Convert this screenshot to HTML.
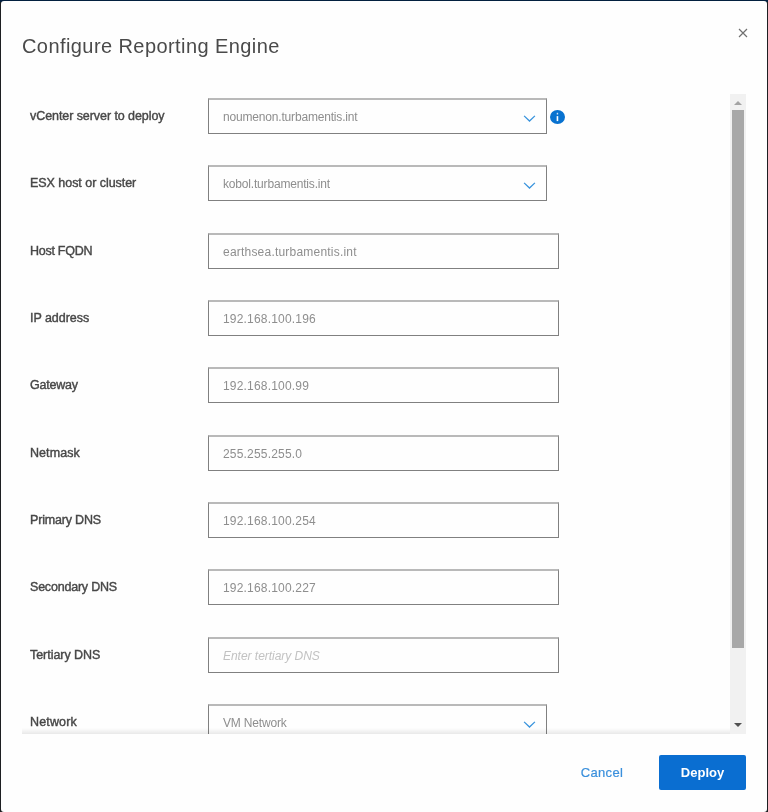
<!DOCTYPE html>
<html>
<head>
<meta charset="utf-8">
<title>Configure Reporting Engine</title>
<style>
html,body{margin:0;padding:0;}
body{width:768px;height:812px;overflow:hidden;background:#1d1f22;font-family:"Liberation Sans",sans-serif;position:relative;}
.topbar{position:absolute;left:0;top:0;width:768px;height:2px;background:#03203f;}
.modal{position:absolute;left:1px;top:1px;width:766px;height:811px;background:#fefefe;border-radius:3px;overflow:hidden;will-change:transform;}
.title{position:absolute;left:21px;top:32px;font-size:20px;line-height:26px;color:#4a4a4a;white-space:nowrap;letter-spacing:0.42px;}
.close{position:absolute;left:737px;top:27px;width:10px;height:10px;}
.scroll{position:absolute;left:21px;top:93px;width:724px;height:640px;overflow:hidden;}
.row{position:absolute;left:0;width:724px;height:36px;}
.lbl{position:absolute;left:8px;top:0;height:36px;line-height:36px;font-size:12.5px;color:#474747;white-space:nowrap;-webkit-text-stroke:0.4px #474747;letter-spacing:-0.04px;}
.box{position:absolute;left:186px;top:0;width:349px;height:34px;border:1px solid #808080;border-top:2px solid #b9b9b9;height:33px;background:#fefefe;}
.box.sel{width:337px;}
.val{position:absolute;left:14px;top:0.5px;height:33px;line-height:33px;font-size:12px;color:#8e8e8e;white-space:nowrap;letter-spacing:-0.18px;}
.val.num{letter-spacing:0.19px;}
.val.ph{font-style:italic;color:#c2c2c2;letter-spacing:-0.03px;}
.chev{position:absolute;left:314px;top:15px;width:13px;height:8px;}
.info{position:absolute;left:528px;top:12px;width:15px;height:14px;}
.track{position:absolute;left:729px;top:93px;width:16px;height:640px;background:#f1f1f1;}
.thumb{position:absolute;left:2px;top:16px;width:12px;height:538px;background:#a8a8a8;}
.arr{position:absolute;left:4px;width:8px;height:4px;}
.sep{position:absolute;left:21px;top:727px;width:708px;height:6px;background:linear-gradient(to bottom,rgba(0,0,0,0),rgba(0,0,0,0.085));}
.cancel{position:absolute;left:561px;top:754px;width:80px;height:35px;line-height:35px;text-align:center;font-size:13px;color:#3b90dc;letter-spacing:0.3px;-webkit-text-stroke:0.2px #3b90dc;}
.deploy{position:absolute;left:658px;top:754px;width:87px;height:35px;line-height:35px;text-align:center;font-size:13px;font-weight:bold;color:#fff;background:#0a6ed1;border-radius:2px;}
</style>
</head>
<body>
<div class="topbar"></div>
<div class="modal">
  <div class="title">Configure Reporting Engine</div>
  <svg class="close" viewBox="0 0 10 10"><path d="M1 1 L9 9 M9 1 L1 9" stroke="#707070" stroke-width="1.15" fill="none"/></svg>

  <div class="scroll">
    <div class="row" style="top:4px"><div class="lbl" style="letter-spacing:-0.07px">vCenter server to deploy</div>
      <div class="box sel"><div class="val">noumenon.turbamentis.int</div>
        <svg class="chev" viewBox="0 0 13 8"><path d="M1.1 0.9 L6.5 6.0 L11.9 0.9" stroke="#3a94dd" stroke-width="1.3" fill="none"/></svg></div>
      <svg class="info" viewBox="0 0 15 14"><ellipse cx="7.5" cy="7" rx="7.5" ry="7" fill="#0872d0"/><rect x="6.65" y="6.1" width="1.6" height="5" fill="#fff"/><rect x="6.75" y="2.8" width="1.4" height="1.7" fill="#fff" opacity="0.8"/></svg>
    </div>
    <div class="row" style="top:71px"><div class="lbl">ESX host or cluster</div>
      <div class="box sel"><div class="val">kobol.turbamentis.int</div>
        <svg class="chev" viewBox="0 0 13 8"><path d="M1.1 0.9 L6.5 6.0 L11.9 0.9" stroke="#3a94dd" stroke-width="1.3" fill="none"/></svg></div>
    </div>
    <div class="row" style="top:139px"><div class="lbl" style="letter-spacing:-0.26px">Host FQDN</div>
      <div class="box"><div class="val" style="letter-spacing:0.21px">earthsea.turbamentis.int</div></div></div>
    <div class="row" style="top:206px"><div class="lbl">IP address</div>
      <div class="box"><div class="val num">192.168.100.196</div></div></div>
    <div class="row" style="top:273px"><div class="lbl" style="letter-spacing:-0.23px">Gateway</div>
      <div class="box"><div class="val num">192.168.100.99</div></div></div>
    <div class="row" style="top:341px"><div class="lbl" style="letter-spacing:0.07px">Netmask</div>
      <div class="box"><div class="val num">255.255.255.0</div></div></div>
    <div class="row" style="top:408px"><div class="lbl" style="letter-spacing:-0.18px">Primary DNS</div>
      <div class="box"><div class="val num">192.168.100.254</div></div></div>
    <div class="row" style="top:475px"><div class="lbl" style="letter-spacing:-0.21px">Secondary DNS</div>
      <div class="box"><div class="val num">192.168.100.227</div></div></div>
    <div class="row" style="top:543px"><div class="lbl">Tertiary DNS</div>
      <div class="box"><div class="val ph">Enter tertiary DNS</div></div></div>
    <div class="row" style="top:610px"><div class="lbl" style="letter-spacing:0.15px">Network</div>
      <div class="box sel"><div class="val">VM Network</div>
        <svg class="chev" viewBox="0 0 13 8"><path d="M1.1 0.9 L6.5 6.0 L11.9 0.9" stroke="#3a94dd" stroke-width="1.3" fill="none"/></svg></div>
    </div>
  </div>

  <div class="track">
    <svg class="arr" style="top:6.5px" viewBox="0 0 8 4"><path d="M0 4 L4 0 L8 4 Z" fill="#a3a3a3"/></svg>
    <div class="thumb"></div>
    <svg class="arr" style="top:629px" viewBox="0 0 8 4"><path d="M0 0 L4 4 L8 0 Z" fill="#505050"/></svg>
  </div>
  <div class="sep"></div>

  <div class="cancel">Cancel</div>
  <div class="deploy">Deploy</div>
</div>
</body>
</html>
